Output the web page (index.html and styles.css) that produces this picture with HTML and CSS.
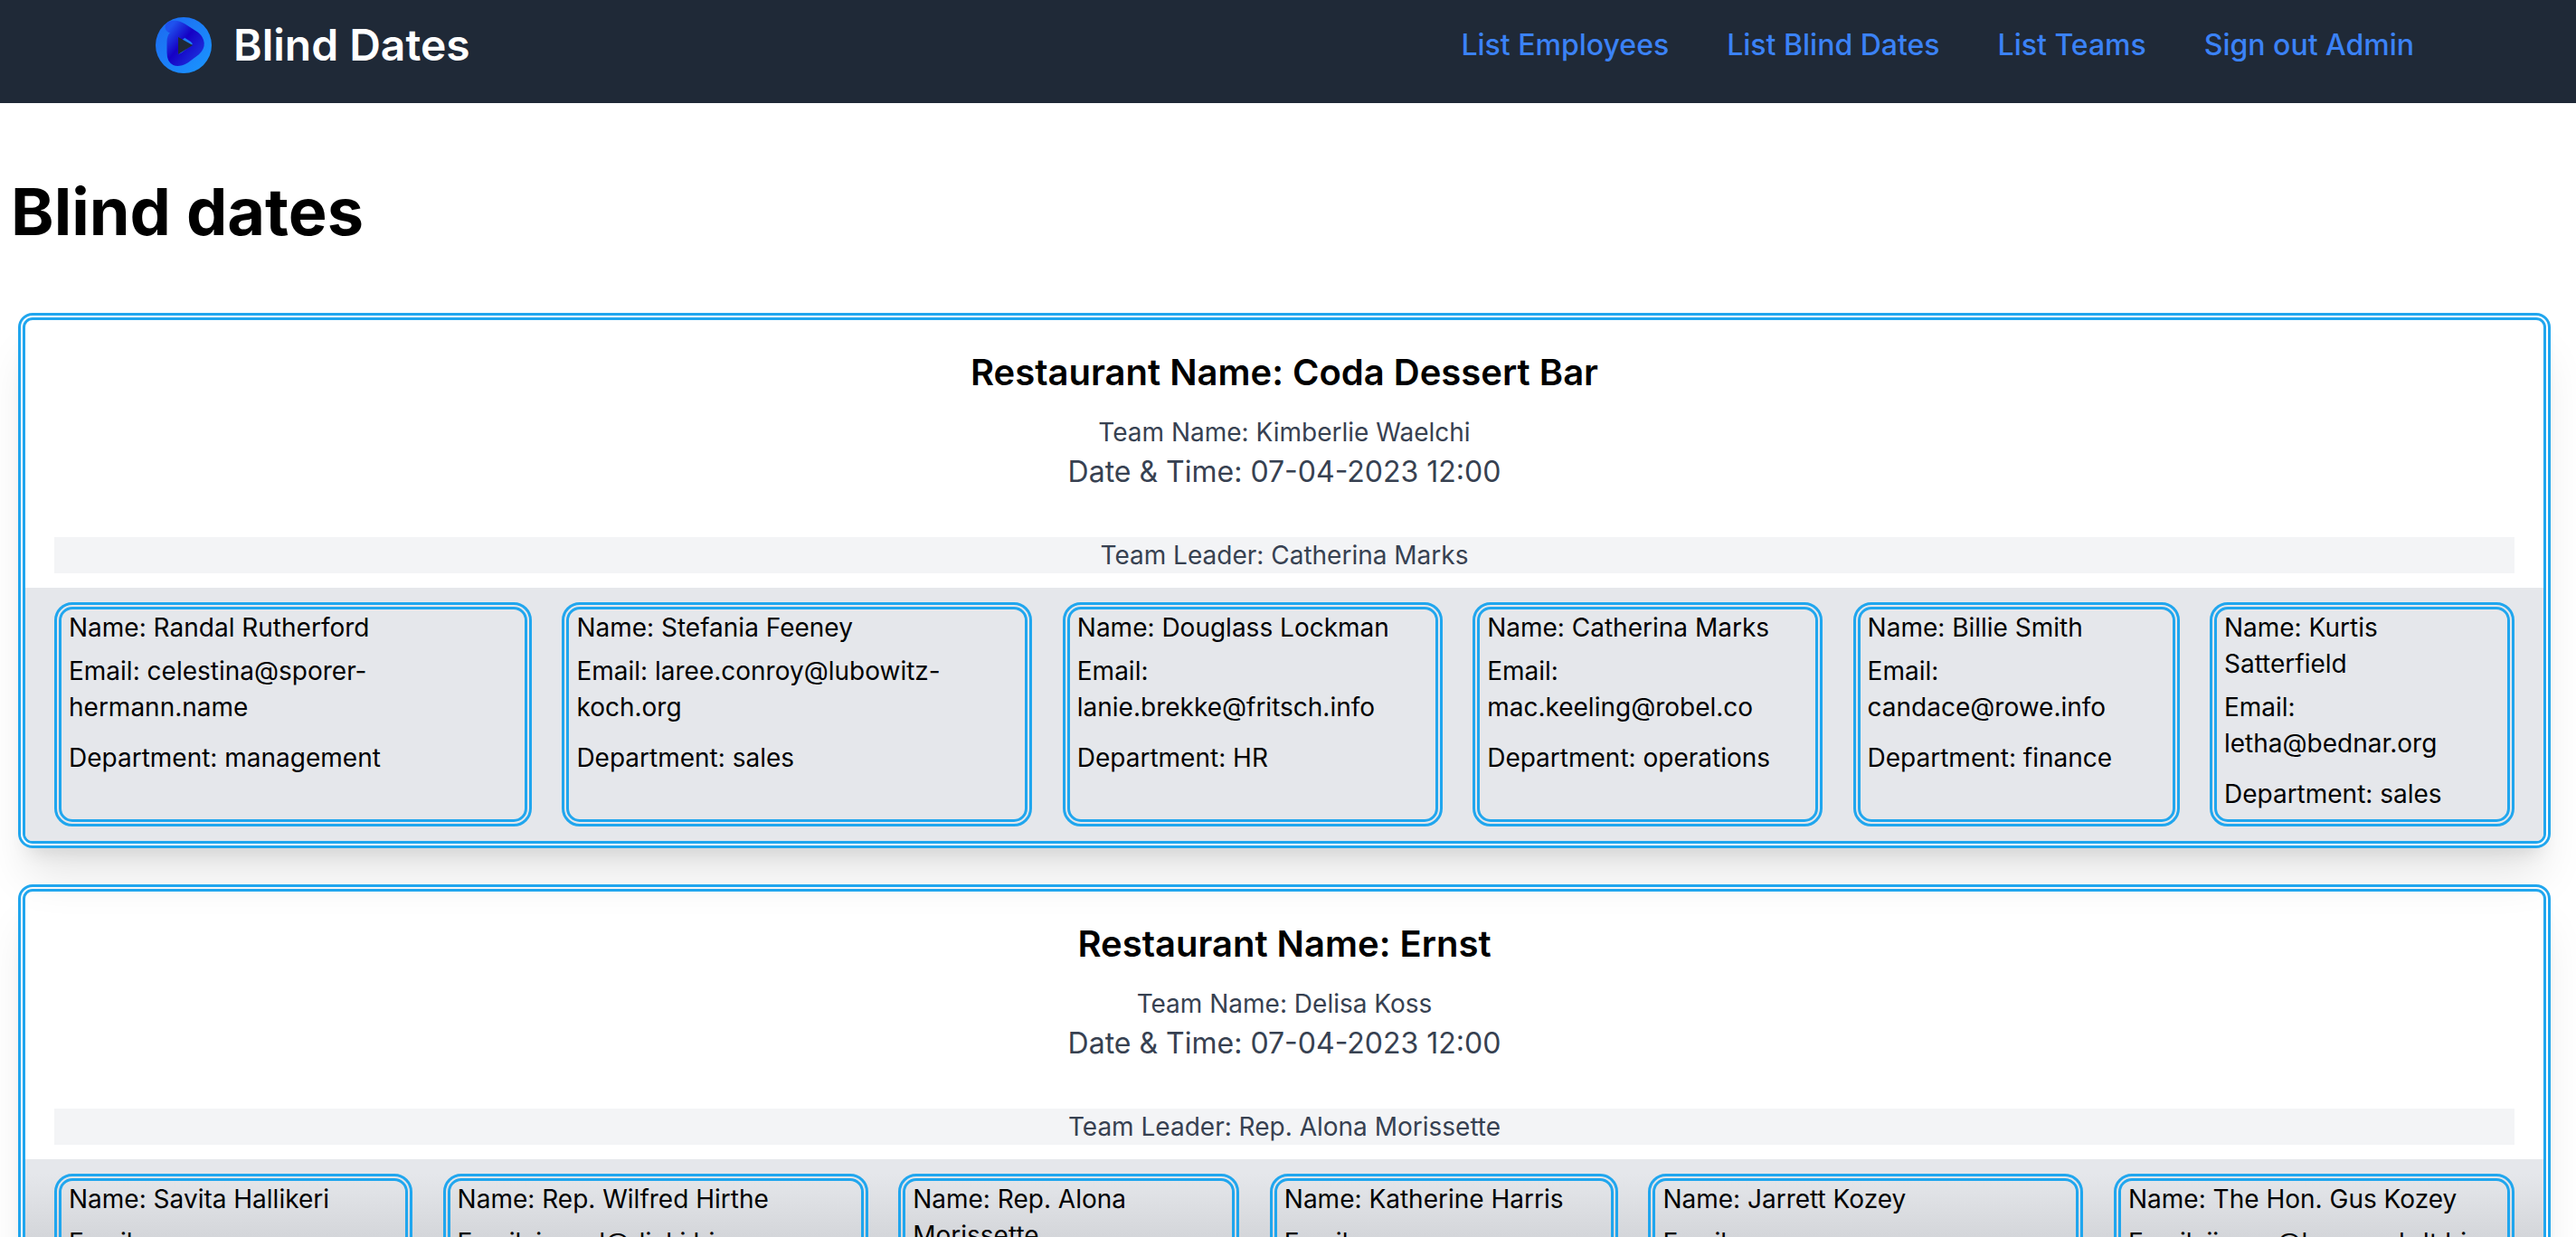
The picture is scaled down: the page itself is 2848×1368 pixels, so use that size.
FILE: index.html
```html
<!DOCTYPE html>
<html lang="en">
<head>
  <meta charset="UTF-8" />
  <title>Blind Dates</title>
  <link rel="stylesheet" href="styles.css">
</head>
<body>
  <nav class="navbar">
    <a class="brand" href="#">
      <svg class="logo" viewBox="0 0 62 62" width="62" height="62">
        <defs>
          <linearGradient id="disc" x1="0" y1="0" x2="1" y2="1">
            <stop offset="0" stop-color="#1c68f0"/>
            <stop offset="1" stop-color="#1a96ff"/>
          </linearGradient>
          <linearGradient id="ribbon" x1="0" y1="0" x2="1" y2="1">
            <stop offset="0" stop-color="#1f52ee"/>
            <stop offset="0.45" stop-color="#1500c4"/>
            <stop offset="1" stop-color="#1c30dc"/>
          </linearGradient>
        </defs>
        <circle cx="31" cy="31" r="31" fill="url(#disc)"/>
        <path d="M17 11 Q23 9 29 13 L43 22 Q51 29 44 36 L32 45 Q19 52 19 39 V27 Q19 19 27 19" fill="none" stroke="url(#ribbon)" stroke-width="13" stroke-linecap="round" stroke-linejoin="round"/>
        <path d="M25 22 L41 31 L25 41 Z" fill="#1f2937"/>
      </svg>
      <span class="brand-name">Blind Dates</span>
    </a>
    <div class="nav-links">
      <a href="#">List Employees</a>
      <a href="#">List Blind Dates</a>
      <a href="#">List Teams</a>
      <a href="#">Sign out Admin</a>
    </div>
  </nav>

  <h1 class="page-title">Blind dates</h1>

  <div class="date-list">
    <section class="date-card">
      <div class="date-head">
        <h2>Restaurant Name: Coda Dessert Bar</h2>
        <p class="team-name">Team Name: Kimberlie Waelchi</p>
        <p class="date-time">Date &amp; Time: 07-04-2023 12:00</p>
      </div>
      <div class="team-leader">Team Leader: Catherina Marks</div>
      <div class="members members-first">
        <div class="member">
          <p>Name: Randal Rutherford</p>
          <p class="email">Email: celestina@sporer-hermann.name</p>
          <p class="dept">Department: management</p>
        </div>
        <div class="member">
          <p>Name: Stefania Feeney</p>
          <p class="email">Email: laree.conroy@lubowitz-koch.org</p>
          <p class="dept">Department: sales</p>
        </div>
        <div class="member">
          <p>Name: Douglass Lockman</p>
          <p class="email">Email: lanie.brekke@fritsch.info</p>
          <p class="dept">Department: HR</p>
        </div>
        <div class="member">
          <p>Name: Catherina Marks</p>
          <p class="email">Email: mac.keeling@robel.co</p>
          <p class="dept">Department: operations</p>
        </div>
        <div class="member">
          <p>Name: Billie Smith</p>
          <p class="email">Email: candace@rowe.info</p>
          <p class="dept">Department: finance</p>
        </div>
        <div class="member">
          <p>Name: Kurtis Satterfield</p>
          <p class="email">Email: letha@bednar.org</p>
          <p class="dept">Department: sales</p>
        </div>
      </div>
    </section>

    <section class="date-card">
      <div class="date-head">
        <h2>Restaurant Name: Ernst</h2>
        <p class="team-name">Team Name: Delisa Koss</p>
        <p class="date-time">Date &amp; Time: 07-04-2023 12:00</p>
      </div>
      <div class="team-leader">Team Leader: Rep. Alona Morissette</div>
      <div class="members members-second">
        <div class="member">
          <p>Name: Savita Hallikeri</p>
          <p class="email">Email: gerhard.schneider@kuhn.info</p>
          <p class="dept">Department: sales</p>
        </div>
        <div class="member">
          <p>Name: Rep. Wilfred Hirthe</p>
          <p class="email">Email: jarred@dicki.biz</p>
          <p class="dept">Department: finance</p>
        </div>
        <div class="member">
          <p>Name: Rep. Alona Morissette</p>
          <p class="email">Email: alona@morissette.org</p>
          <p class="dept">Department: HR</p>
        </div>
        <div class="member">
          <p>Name: Katherine Harris</p>
          <p class="email">Email: katherine.harris@koch.com</p>
          <p class="dept">Department: operations</p>
        </div>
        <div class="member">
          <p>Name: Jarrett Kozey</p>
          <p class="email">Email: jarrett.kozey@schowalter.name</p>
          <p class="dept">Department: management</p>
        </div>
        <div class="member">
          <p>Name: The Hon. Gus Kozey</p>
          <p class="email">Email: jimmy@bauerschdt.biz</p>
          <p class="dept">Department: sales</p>
        </div>
      </div>
    </section>
  </div>
</body>
</html>
```

FILE: styles.css
```css
* {
  box-sizing: border-box;
}

html, body {
  height: 100vh;
  overflow: hidden;
}

body {
  margin: 0;
  background: white;
  font-family: 'Inter', sans-serif;
  color: black;
}

p, h1, h2 {
  margin: 0;
}

a {
  text-decoration: none;
}

.navbar {
  height: 114px;
  padding: 0 179px 14px 172px;
  background: #1f2937;
  display: flex;
  align-items: center;
  justify-content: space-between;
}

.brand {
  display: flex;
  align-items: center;
  gap: 24px;
}

.logo {
  display: block;
}

.brand-name {
  font-size: 48px;
  line-height: 64px;
  font-weight: 600;
  color: white;
}

.nav-links {
  display: flex;
  gap: 64px;
}

.nav-links a {
  font-size: 32px;
  line-height: 48px;
  font-weight: 500;
  color: #3b82f6;
}

.page-title {
  padding: 80px 0 72px 12px;
  font-size: 72px;
  line-height: 80px;
  font-weight: 700;
}

.date-list {
  margin: 0 28px 0 20px;
  display: flex;
  flex-direction: column;
  gap: 40px;
}

.date-card {
  border: 8px double #20a6ee;
  border-radius: 16px;
  box-shadow: 0 40px 50px -10px rgba(0, 0, 0, 0.1), 0 16px 20px -12px rgba(0, 0, 0, 0.1);
  overflow: hidden;
}

.date-head {
  padding: 30px 32px 48px;
  text-align: center;
  color: #374151;
}

.date-head h2 {
  font-size: 40px;
  line-height: 56px;
  font-weight: 600;
  color: black;
  margin-bottom: 18px;
}

.team-name {
  font-size: 28px;
  line-height: 40px;
}

.date-time {
  font-size: 32px;
  line-height: 48px;
}

.team-leader {
  margin: 0 32px 16px;
  background: #f3f4f6;
  text-align: center;
  font-size: 28px;
  line-height: 40px;
  color: #374151;
}

.members {
  padding: 16px 32px;
  background: #e5e7eb;
  display: grid;
  justify-content: space-between;
  font-size: 28px;
  line-height: 40px;
}

.members-first {
  grid-template-columns: 528px 520px 420px 387px 361px 337px;
}

.members-second {
  grid-template-columns: 396px 470px 377px 385px 481px 443px;
  background: linear-gradient(#e5e7eb, #e5e7eb 16px, #d4d6da 86px, #d4d6da);
}

.member {
  border: 8px double #20a6ee;
  border-radius: 20px;
  padding: 0 8px 8px;
}

.email {
  margin-top: 8px;
}

.dept {
  margin-top: 16px;
}
```
